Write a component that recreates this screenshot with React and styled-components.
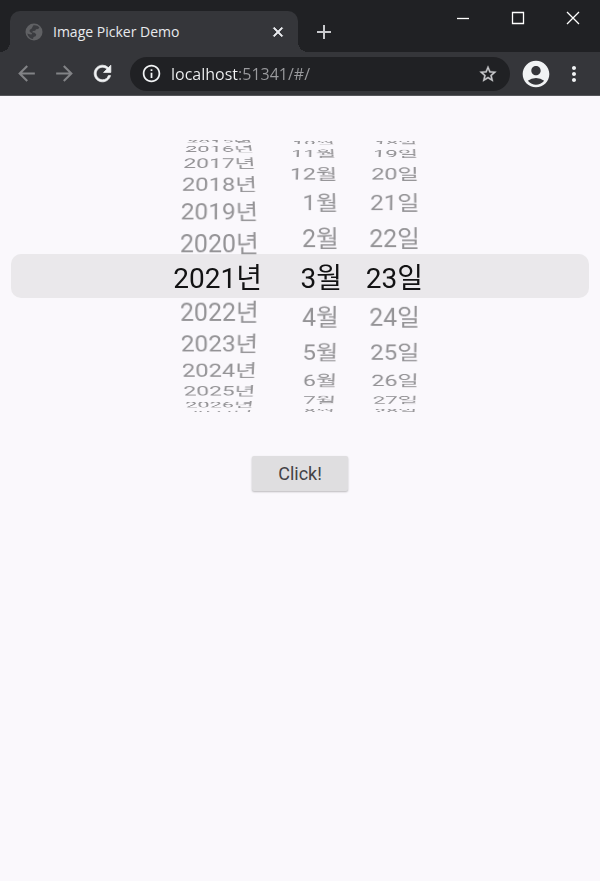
import React, { useState } from 'react';
import styled, { createGlobalStyle } from 'styled-components';
import {
  MdAccountCircle,
  MdAdd,
  MdArrowBack,
  MdArrowForward,
  MdClose,
  MdInfoOutline,
  MdMoreVert,
  MdRefresh,
  MdStarBorder,
} from 'react-icons/md';

// first and last are the outermost rows still visible on each wheel
const YEARS = [2015, 2016, 2017, 2018, 2019, 2020, 2021, 2022, 2023, 2024, 2025, 2026, 2027];
const MONTHS = [10, 11, 12, 1, 2, 3, 4, 5, 6, 7, 8];
const DAYS = [18, 19, 20, 21, 22, 23, 24, 25, 26, 27, 28];

const Wheel = ({ label, items, unit, initial, step, width, inset }) => {
  const [selected, setSelected] = useState(initial);
  const current = items.indexOf(selected);

  return (
    <WheelFrame role="listbox" aria-label={label} $width={width}>
      {items.map((item, index) => (
        <WheelItem
          key={item}
          role="option"
          aria-selected={item === selected}
          $selected={item === selected}
          $inset={inset}
          style={{ '--angle': `${(current - index) * step}deg` }}
          onClick={() => setSelected(item)}
        >
          {item}
          {unit}
        </WheelItem>
      ))}
    </WheelFrame>
  );
};

const App = () => {
  const [address, setAddress] = useState('localhost:51341/#/');

  return (
    <Window>
      <GlobalStyle />
      <TabStrip>
        <Tab>
          <TabIcon viewBox="0 0 18 18">
            <circle cx="9" cy="9" r="8.5" fill="#606164" />
            <path
              d="M8.2 2.4c2.2-.5 4.6.2 6.2 2.1l-1.2 1.5-2.2.3-.8 1.5-2.2.3-.9 1.2 2.6.5 1.6 1.7-.7 1.7-2 .7-.6 2.1c-2.900-.4-5.200-2.600-5.700-5.500l2.300.8 1.900.3.6-1.300-2.300-1.200-.2-2.200 2.100-1.500z"
              fill="#3b3c40"
            />
          </TabIcon>
          <TabTitle>Image Picker Demo</TabTitle>
          <TabButton aria-label="Close tab">
            <MdClose size={16} />
          </TabButton>
        </Tab>
        <NewTabButton aria-label="New tab">
          <MdAdd size={24} />
        </NewTabButton>
        <WindowControls>
          <WindowButton aria-label="Minimize">
            <svg width="14" height="14" viewBox="0 0 14 14">
              <path d="M1 7.5h12" />
            </svg>
          </WindowButton>
          <WindowButton aria-label="Maximize">
            <svg width="14" height="14" viewBox="0 0 14 14">
              <path d="M1.5 1.5h11v11h-11z" />
            </svg>
          </WindowButton>
          <WindowButton aria-label="Close window">
            <svg width="14" height="14" viewBox="0 0 14 14">
              <path d="M1 1l12 12M13 1L1 13" />
            </svg>
          </WindowButton>
        </WindowControls>
      </TabStrip>

      <Toolbar>
        <Navigation>
          <NavButton aria-label="Back" disabled>
            <MdArrowBack size={25} />
          </NavButton>
          <NavButton aria-label="Forward" disabled>
            <MdArrowForward size={25} />
          </NavButton>
          <NavButton aria-label="Reload">
            <MdRefresh size={25} stroke="currentColor" strokeWidth={0.7} />
          </NavButton>
        </Navigation>
        <AddressBar>
          <MdInfoOutline size={21} />
          <AddressInput
            aria-label="Address"
            spellCheck={false}
            value={address}
            onChange={(e) => setAddress(e.target.value)}
          />
          <BookmarkButton aria-label="Bookmark">
            <MdStarBorder size={20} stroke="currentColor" strokeWidth={0.4} />
          </BookmarkButton>
        </AddressBar>
        <BarButton aria-label="Profile">
          <MdAccountCircle size={32} />
        </BarButton>
        <BarButton aria-label="Menu">
          <MdMoreVert size={24} />
        </BarButton>
      </Toolbar>

      <Page>
        <Picker>
          <Highlight />
          <Wheels>
            <Wheel label="Year" items={YEARS} unit="년" initial={2021} step={11.2} width={100} inset={12} />
            <Wheel label="Month" items={MONTHS} unit="월" initial={3} step={12.9} width={86} inset={18} />
            <Wheel label="Day" items={DAYS} unit="일" initial={23} step={12.9} width={92} inset={29} />
          </Wheels>
        </Picker>
        <ClickButton>Click!</ClickButton>
      </Page>
    </Window>
  );
};

const GlobalStyle = createGlobalStyle`
  * {
    box-sizing: border-box;
  }

  body {
    margin: 0;
    background-color: #faf8fc;
    font-family: Roboto, 'Noto Sans CJK KR', sans-serif;
  }

  button {
    padding: 0;
    border: none;
    background: none;
    color: inherit;
    cursor: pointer;
  }

  /* the material icons carry an invisible bounding box */
  path[fill='none'] {
    stroke: none;
  }
`;

const Window = styled.div`
  display: flex;
  flex-direction: column;
  min-height: 100vh;
`;

const TabStrip = styled.div`
  display: flex;
  height: 52px;
  padding-left: 10px;
  background-color: #202124;
  color: #e8eaed;
`;

const Tab = styled.div`
  position: relative;
  display: flex;
  align-items: center;
  flex: 0 1 288px;
  gap: 10px;
  margin-top: 11px;
  padding: 0 12px 0 15px;
  border-radius: 10px 10px 0 0;
  background-color: #35363a;

  &::before,
  &::after {
    content: '';
    position: absolute;
    bottom: 0;
    width: 10px;
    height: 10px;
  }

  &::before {
    right: 100%;
    background: radial-gradient(circle at 0 0, transparent 10px, #35363a 10px);
  }

  &::after {
    left: 100%;
    background: radial-gradient(circle at 100% 0, transparent 10px, #35363a 10px);
  }
`;

const TabIcon = styled.svg`
  flex: none;
  width: 18px;
  height: 18px;
`;

const TabTitle = styled.span`
  flex: 1;
  overflow: hidden;
  font-family: 'Open Sans', sans-serif;
  font-size: 14px;
  line-height: 20px;
  white-space: nowrap;
`;

const TabButton = styled.button`
  display: flex;

  svg {
    stroke: currentColor;
    stroke-width: 1.2;
  }
`;

const NewTabButton = styled.button`
  display: flex;
  align-items: center;
  margin: 11px 0 0 14px;
  color: #c8c9cc;
`;

const WindowControls = styled.div`
  display: flex;
  height: 36px;
  margin-left: auto;
`;

const WindowButton = styled.button`
  display: flex;
  align-items: center;
  justify-content: center;
  width: 55px;

  svg {
    fill: none;
    stroke: #ffffff;
    stroke-width: 1.3;
  }
`;

const Toolbar = styled.div`
  display: flex;
  align-items: center;
  height: 44px;
  gap: 10px;
  padding: 0 14px;
  border-bottom: 1px solid #55565a;
  background-color: #35363a;
  color: #f1f3f4;
`;

const Navigation = styled.nav`
  display: flex;
  gap: 13px;
  margin-right: 5px;
`;

const NavButton = styled.button`
  display: flex;

  &:disabled {
    color: #828386;
    cursor: default;
  }
`;

const AddressBar = styled.div`
  display: flex;
  align-items: center;
  flex: 1;
  min-width: 0;
  height: 34px;
  gap: 9px;
  padding: 0 12px 0 11px;
  border-radius: 17px;
  background-color: #202124;

  > svg {
    flex: none;
  }
`;

// host part is bright, the rest of the address is dimmed
const AddressInput = styled.input`
  flex: 1;
  min-width: 0;
  padding: 0;
  border: none;
  outline: none;
  background: linear-gradient(to right, #f1f3f4 67px, #9a9b9e 67px);
  background-clip: text;
  color: transparent;
  caret-color: #f1f3f4;
  font-family: 'Open Sans', sans-serif;
  font-size: 16px;
  line-height: 24px;
`;

const BarButton = styled.button`
  display: flex;
  flex: none;
`;

const BookmarkButton = styled(BarButton)`
  && {
    color: #c8c9cc;
  }
`;

const Page = styled.main`
  display: flex;
  flex-direction: column;
  align-items: center;
  flex: 1;
  gap: 44px;
  padding: 44px 11px;
`;

const Picker = styled.div`
  display: grid;
  align-items: center;
  width: 100%;
`;

const Highlight = styled.div`
  grid-area: 1 / 1;
  height: 44px;
  border-radius: 10px;
  background-color: #eae8eb;
`;

const Wheels = styled.div`
  grid-area: 1 / 1;
  display: flex;
  justify-content: center;
  padding-left: 20px;
`;

const WheelFrame = styled.div`
  display: grid;
  align-items: center;
  width: ${({ $width }) => $width}px;
  height: 272px;
  overflow: hidden;
  perspective: 510px;
`;

// every row is a face of a cylinder with a radius of 178px
const WheelItem = styled.div`
  grid-area: 1 / 1;
  padding-top: 5px;
  padding-right: ${({ $inset, $selected }) => ($selected ? $inset - 3 : $inset)}px;
  color: ${({ $selected }) => ($selected ? '#121213' : '#949396')};
  font-size: ${({ $selected }) => ($selected ? 28 : 25)}px;
  line-height: 40px;
  text-align: right;
  white-space: nowrap;
  cursor: pointer;
  transform: translateZ(-178px) rotateX(var(--angle)) translateZ(178px);
`;

const ClickButton = styled.button`
  && {
    height: 35px;
    padding: 0 26px;
    border-radius: 2px;
    background-color: #dfdee0;
    box-shadow: 0 1px 2px rgba(0, 0, 0, 0.25);
    color: #444346;
    font-family: Roboto, sans-serif;
    font-size: 18px;
  }
`;

export default App;
